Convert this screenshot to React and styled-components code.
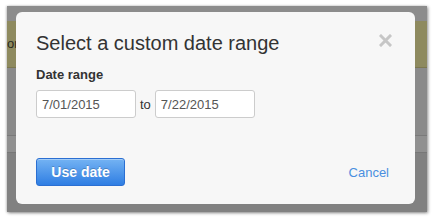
import React from "react";
import styled, { createGlobalStyle } from "styled-components";

const GlobalStyle = createGlobalStyle`
  html, body {
    margin: 0;
    padding: 0;
    background: #ffffff;
    font-family: "Liberation Sans", Arial, sans-serif;
  }
`;

const Shot = styled.div`
  width: 432px;
  height: 218px;
  padding: 6px 0 0 7px;
  box-sizing: border-box;
`;

const Frame = styled.div`
  position: relative;
  width: 420px;
  height: 206px;
  background: #8c8c8c;
  box-shadow: 1px 1px 3px rgba(0, 0, 0, 0.45), -1px 0 2px rgba(0, 0, 0, 0.15);
  overflow: hidden;
  display: flex;
  flex-direction: column;
`;

const Band = styled.div`
  height: ${(p) => p.h}px;
  background: ${(p) => p.bg};
  border-bottom: 1px solid ${(p) => p.line || "transparent"};
  display: flex;
  align-items: center;
  font-size: 13px;
  color: #2a2a20;
`;

const Modal = styled.div`
  position: absolute;
  left: 9px;
  top: 6px;
  width: 399px;
  height: 192px;
  background: #f7f7f7;
  border-radius: 6px;
  box-sizing: border-box;
  padding: 19px 20px 0 20px;
  display: flex;
  flex-direction: column;
`;

const Header = styled.div`
  display: flex;
  justify-content: space-between;
  align-items: flex-start;
`;

const Title = styled.h2`
  margin: 0;
  font-size: 20px;
  font-weight: normal;
  color: #333333;
  line-height: 24px;
`;

const Close = styled.svg`
  margin-top: 3px;
  margin-right: 3px;
`;

const Label = styled.label`
  margin-top: 12px;
  font-size: 13px;
  font-weight: bold;
  color: #333333;
  line-height: 16px;
`;

const Row = styled.div`
  display: flex;
  align-items: center;
  gap: 4px;
  margin-top: 7px;
  font-size: 13px;
  color: #333333;
`;

const DateInput = styled.input`
  width: 100px;
  height: 28px;
  box-sizing: border-box;
  border: 1px solid #cccccc;
  border-radius: 3px;
  background: #ffffff;
  padding: 0 5px;
  font-family: "Liberation Sans", Arial, sans-serif;
  font-size: 13px;
  color: #555555;
  outline: none;
`;

const Footer = styled.div`
  margin-top: 40px;
  display: flex;
  justify-content: space-between;
  align-items: center;
  padding-right: 6px;
`;

const Button = styled.button`
  width: 89px;
  height: 28px;
  border: 1px solid #2b6fd2;
  border-radius: 3px;
  background: linear-gradient(#74b3f3, #2f7ee3);
  box-shadow: inset 0 1px 0 rgba(255, 255, 255, 0.35);
  color: #ffffff;
  font-family: "Liberation Sans", Arial, sans-serif;
  font-weight: bold;
  font-size: 14px;
  text-shadow: 0 -1px 0 rgba(0, 0, 0, 0.2);
  padding: 0;
`;

const Link = styled.a`
  font-size: 13px;
  color: #4a8fe0;
  text-decoration: none;
`;

export default function App() {
  return (
    <>
      <GlobalStyle />
      <Shot>
        <Frame>
          <Band h={14} bg="#8c8c8c" />
          <Band h={48} bg="#8e8a5f" line="#7c7850">
            or
          </Band>
          <Band h={69} bg="#8a8a8a" line="#7a7a7a" />
          <Band h={16} bg="#909090" line="#777777" />
          <Band h={60} bg="#818181" />
          <Modal>
            <Header>
              <Title>Select a custom date range</Title>
              <Close width="13" height="13" viewBox="0 0 13 13">
                <path
                  d="M2 2 L11 11 M11 2 L2 11"
                  stroke="#c6c6c6"
                  strokeWidth="3"
                  strokeLinecap="square"
                />
              </Close>
            </Header>
            <Label>Date range</Label>
            <Row>
              <DateInput defaultValue="7/01/2015" />
              <span>to</span>
              <DateInput defaultValue="7/22/2015" />
            </Row>
            <Footer>
              <Button>Use date</Button>
              <Link href="#">Cancel</Link>
            </Footer>
          </Modal>
        </Frame>
      </Shot>
    </>
  );
}
